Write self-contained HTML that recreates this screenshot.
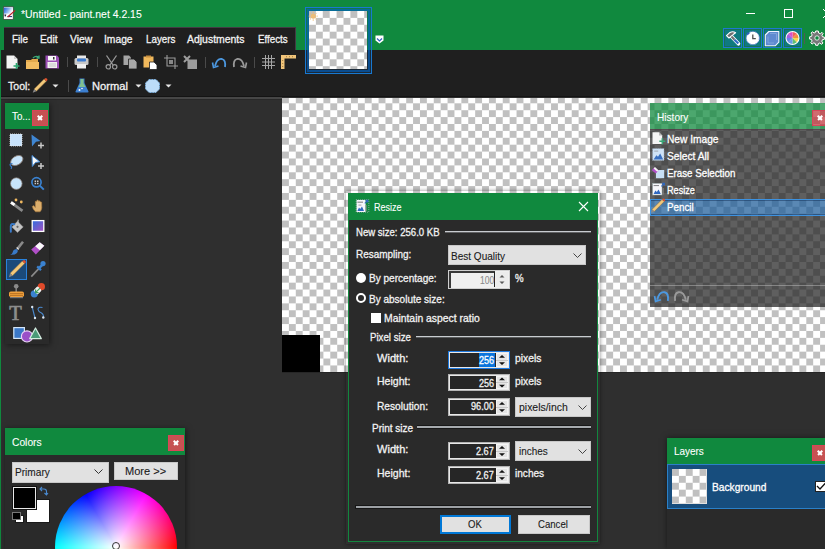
<!DOCTYPE html>
<html><head><meta charset="utf-8">
<style>
*{margin:0;padding:0;box-sizing:border-box}
html,body{width:825px;height:549px;overflow:hidden;background:#2f2f2f;font-family:"Liberation Sans",sans-serif;font-size:12px;letter-spacing:-0.6px;color:#f2f2f2}
.a{position:absolute}
.t{position:absolute;white-space:pre;line-height:12px;font-size:11px;letter-spacing:0;-webkit-text-stroke:0.3px;transform-origin:0 0}
svg{position:absolute;overflow:visible}
.chk{background:repeating-conic-gradient(#fff 0 25%,#c0c0c0 0 50%) 0 0/13.8px 13.8px}
.close{position:absolute;width:16px;height:16px;background:#c65252;box-shadow:inset 0 0 0 1px #dc4458}
.close:before,.close:after{content:"";position:absolute;left:5.2px;top:7.3px;width:6px;height:1.5px;background:#fff;transform:rotate(45deg)}
.close:after{transform:rotate(-45deg)}
.hdr{position:absolute;background:#10893e}
.btn{position:absolute;background:#e1e1e1;border:1px solid #c8c8c8}
.inp{position:absolute;background:#1c1c1c;border:2px solid #c9c9c9;width:62px;height:18px}
.spin{position:absolute;right:0;top:0;width:13px;height:100%;background:#ececec}
.dk{color:#1a1a1a}
.num{font-size:11px;letter-spacing:-0.8px}
</style></head><body>

<!-- ============ title bar ============ -->
<div class="a" style="left:0;top:0;width:825px;height:50px;background:#10893e"></div>
<svg style="left:0;top:0" width="20" height="24" viewBox="0 0 20 24">
 <defs><linearGradient id="ig" x1="0" y1="0" x2="1" y2=".4"><stop offset="0" stop-color="#1f5fd8"/><stop offset=".55" stop-color="#8ab4ee"/><stop offset="1" stop-color="#fff"/></linearGradient></defs>
 <rect x="3.4" y="6.8" width="9.8" height="12.6" fill="#fbfbfb" stroke="#3a3a3a" stroke-width=".7"/>
 <rect x="4" y="7.6" width="8.8" height="6" fill="url(#ig)"/>
 <path d="M4.3 14.6H6.3L5.6 16.4H4.8Z" fill="#10183a"/>
 <path d="M7.5 16.6H12" stroke="#1a2a70" stroke-width="1"/>
 <line x1="7.6" y1="17" x2="15.2" y2="10.4" stroke="#b8202c" stroke-width="1.2"/>
</svg>

<div class="a" style="left:746px;top:13px;width:9px;height:1px;background:#fff"></div>
<div class="a" style="left:784px;top:9px;width:9px;height:9px;border:1px solid #fff"></div>
<svg style="left:823px;top:9px" width="9" height="9"><path d="M0 0L9 9M9 0L0 9" stroke="#fff" stroke-width="1"/></svg>

<!-- right toggles -->
<div class="a" style="left:723px;top:28px;width:19px;height:20px;background:#0f7a7e;border:1px solid #1c78d0;box-shadow:inset 0 0 0 1px #16705a"></div>
<div class="a" style="left:743px;top:28px;width:19px;height:20px;background:#0f7a7e;border:1px solid #1c78d0;box-shadow:inset 0 0 0 1px #16705a"></div>
<div class="a" style="left:763px;top:28px;width:19px;height:20px;background:#0f7a7e;border:1px solid #1c78d0;box-shadow:inset 0 0 0 1px #16705a"></div>
<div class="a" style="left:783px;top:28px;width:19px;height:20px;background:#0f7a7e;border:1px solid #1c78d0;box-shadow:inset 0 0 0 1px #16705a"></div>
<svg style="left:723px;top:28px" width="19" height="20" viewBox="0 0 19 20">
 <path d="M8.5 8.5L15.5 15.8" stroke="#fff" stroke-width="3.6" stroke-linecap="round"/>
 <path d="M3.5 7.6L7 4.4Q10 3 12.6 4.8L10.5 6.3L6 10Z" fill="#6e6e6e" stroke="#fff" stroke-width="1.1" stroke-linejoin="round"/>
 <path d="M8.5 8.5L11.5 11.7" stroke="#707070" stroke-width="2"/>
 <path d="M11.5 11.7L15.3 15.6" stroke="#2f6cc8" stroke-width="2.2"/>
</svg>
<svg style="left:743px;top:28px" width="19" height="20" viewBox="0 0 19 20">
 <circle cx="9.8" cy="10" r="6.6" fill="#fff" stroke="#6a8ad8" stroke-width="1" stroke-dasharray="2 1"/>
 <path d="M9.8 6.4V10.6H12.8" stroke="#505050" stroke-width="1.3" fill="none"/>
 <path d="M3.5 4.5L7 5L4.5 7.5Z" fill="#2f5fc0"/>
</svg>
<svg style="left:763px;top:28px" width="19" height="20" viewBox="0 0 19 20">
 <path d="M5.8 3.5H15.8V14.2L12.2 17.8H2.3V7Z" fill="#5f8ad0" stroke="#f0f4ff" stroke-width="1.1" stroke-linejoin="round"/>
 <path d="M7 5.5H13.5V12M5 8.5V15H11" stroke="#8fb0e0" stroke-width=".7" fill="none"/>
</svg>
<svg style="left:783px;top:28px" width="19" height="20" viewBox="0 0 19 20">
 <circle cx="9.5" cy="10" r="7" fill="#fff"/>
 <g transform="translate(9.5 10)">
 <path d="M0 0V-6A6 6 0 0 1 4.24 -4.24Z" fill="#f06060"/>
 <path d="M0 0L4.24 -4.24A6 6 0 0 1 6 0Z" fill="#f09040"/>
 <path d="M0 0H6A6 6 0 0 1 4.24 4.24Z" fill="#f8d850"/>
 <path d="M0 0L4.24 4.24A6 6 0 0 1 0 6Z" fill="#60c070"/>
 <path d="M0 0V6A6 6 0 0 1 -4.24 4.24Z" fill="#6a9ae8"/>
 <path d="M0 0L-4.24 4.24A6 6 0 0 1 -6 0Z" fill="#6a80e8"/>
 <path d="M0 0H-6A6 6 0 0 1 -4.24 -4.24Z" fill="#a060e0"/>
 <path d="M0 0L-4.24 -4.24A6 6 0 0 1 0 -6Z" fill="#d850c8"/>
 </g>
</svg>
<div class="a" style="left:804px;top:33px;width:1px;height:11px;background:#505a55"></div>
<svg style="left:809px;top:30px" width="16" height="16" viewBox="0 0 16 16">
 <g transform="translate(8 8)">
 <path d="M-1.3 -7H1.3L1.6 -5L3.4 -4.3L5 -5.6L6.1 -4.4L4.9 -2.8L5.5 -1.2L7.4 -0.9V1.3L5.5 1.6L4.8 3.3L6 5L4.4 6.3L2.8 5L1.3 5.6L1 7.3H-1.3L-1.6 5.6L-3.3 4.9L-4.9 6.1L-6.2 4.7L-4.9 3.1L-5.6 1.4L-7.4 1.1V-1.2L-5.6 -1.5L-4.9 -3.2L-6 -4.9L-4.5 -6.2L-2.9 -5L-1.6 -5.5Z" fill="#777" stroke="#fff" stroke-width="1"/>
 <circle r="2.2" fill="#10893e" stroke="#fff" stroke-width=".8"/>
 </g>
</svg>

<!-- ============ menu ============ -->
<div class="a" style="left:4px;top:27px;width:292px;height:23px;background:#1f1f1f;border-top:1px solid #433c44;border-right:1px solid #433c44"></div>








<!-- ============ toolbar ============ -->
<div class="a" style="left:1px;top:50px;width:824px;height:46px;background:#1f1f1f"></div>
<div class="a" style="left:1px;top:96px;width:824px;height:1px;background:#141414"></div>
<div class="a" style="left:1px;top:97px;width:281px;height:2px;background:#464646"></div><div class="a" style="left:1px;top:99px;width:281px;height:1px;background:#282828"></div>

<!-- row 1 icons -->
<svg style="left:6px;top:55px" width="15" height="15" viewBox="0 0 15 15">
 <path d="M0.5 0.5H8L11.5 4V13.5H0.5Z" fill="#f4f4f4"/><path d="M8 0.5V4H11.5" fill="#ccc"/>
 <path d="M10.5 8V14M7.5 11H13.5" stroke="#2aa870" stroke-width="1.6"/>
</svg>
<svg style="left:26px;top:55px" width="15" height="15" viewBox="0 0 15 15">
 <path d="M0 5H5L6 4H12V14H0Z" fill="#e3a94c"/><path d="M0 7H13V14H0Z" fill="#f2bd62"/>
 <path d="M7 3Q10 0 13 2.5M13 0.5V3H10.5" stroke="#3aa878" stroke-width="1.3" fill="none"/>
</svg>
<svg style="left:45px;top:55px" width="15" height="14" viewBox="0 0 15 14">
 <path d="M0.5 0.5H12L14 2.5V13.5H0.5Z" fill="#9b4fb5"/>
 <rect x="3" y="1" width="8" height="4.5" fill="#fafafa"/><rect x="8" y="2" width="1.5" height="2.5" fill="#333"/>
 <rect x="2.5" y="7" width="9.5" height="6" fill="#f0f0f0"/><path d="M4 9H11M4 11H11" stroke="#bbb" stroke-width=".8"/>
</svg>
<div class="a" style="left:67px;top:57px;width:1px;height:10px;background:#4a4a4a"></div>
<svg style="left:74px;top:55px" width="15" height="14" viewBox="0 0 15 14">
 <rect x="3" y="0.5" width="9" height="3" fill="#e8e8e8"/>
 <rect x="0.5" y="3" width="14" height="7" rx="1.5" fill="#c8c8c8"/>
 <rect x="3" y="3.5" width="9" height="3" rx="1" fill="#3a7ad0"/>
 <rect x="3" y="9" width="9" height="4.5" fill="#eee"/>
</svg>
<div class="a" style="left:97px;top:57px;width:1px;height:10px;background:#4a4a4a"></div>
<svg style="left:105px;top:55px" width="13" height="15" viewBox="0 0 13 15">
 <path d="M1.5 0.5L8 10M11.5 0.5L5 10" stroke="#9a9a9a" stroke-width="1.3"/>
 <circle cx="3.3" cy="11.8" r="2.2" fill="none" stroke="#9a9a9a" stroke-width="1.2"/>
 <circle cx="9.7" cy="11.8" r="2.2" fill="none" stroke="#9a9a9a" stroke-width="1.2"/>
</svg>
<svg style="left:123px;top:55px" width="15" height="15" viewBox="0 0 15 15">
 <path d="M0.5 0.5H6L8 2.5V10H0.5Z" fill="#a5a5a5"/>
 <path d="M5.5 4H11L14 7V14H5.5Z" fill="#a8a8a8" stroke="#1f1f1f" stroke-width=".8"/>
</svg>
<svg style="left:143px;top:55px" width="15" height="15" viewBox="0 0 15 15">
 <rect x="0.5" y="1.5" width="10" height="11" fill="#f0b85c"/><rect x="3" y="0.5" width="5" height="2" fill="#c89040"/>
 <path d="M6.5 7H11L14 10V14.5H6.5Z" fill="#fff" stroke="#1f1f1f" stroke-width=".8"/>
</svg>
<svg style="left:164px;top:55px" width="14" height="14" viewBox="0 0 14 14">
 <path d="M3 0V11H14M0 3H11V14" stroke="#9a9a9a" stroke-width="1.1" fill="none"/>
 <rect x="5" y="5" width="4" height="4" fill="#888"/>
</svg>
<svg style="left:183px;top:55px" width="14" height="14" viewBox="0 0 14 14">
 <rect x="4.5" y="4.5" width="9.5" height="9.5" fill="#9d9d9d"/>
 <path d="M1 1L7 7M7 1L1 7" stroke="#9d9d9d" stroke-width="2"/>
</svg>
<div class="a" style="left:205px;top:57px;width:1px;height:11px;background:#4a4a4a"></div>
<svg style="left:212px;top:58px" width="15" height="10" viewBox="0 0 15 10">
 <path d="M3 8Q5 0 10 1Q14 2 13 9" stroke="#4c98e0" stroke-width="1.8" fill="none"/>
 <path d="M0.5 4.5L1.5 9.5L6.5 8" stroke="#4c98e0" stroke-width="1.6" fill="none"/>
</svg>
<svg style="left:232px;top:58px" width="15" height="10" viewBox="0 0 15 10">
 <path d="M12 8Q10 0 5 1Q1 2 2 9" stroke="#9a9a9a" stroke-width="1.8" fill="none"/>
 <path d="M14.5 4.5L13.5 9.5L8.5 8" stroke="#9a9a9a" stroke-width="1.6" fill="none"/>
</svg>
<div class="a" style="left:254px;top:57px;width:1px;height:11px;background:#4a4a4a"></div>
<svg style="left:262px;top:55px" width="13" height="14" viewBox="0 0 13 14">
 <path d="M3.5 0V14M6.5 0V14M9.5 0V14M0 3.5H13M0 7H13M0 10.5H13" stroke="#a5a5a5" stroke-width="1"/>
</svg>
<svg style="left:281px;top:55px" width="15" height="14" viewBox="0 0 15 14">
 <path d="M0 0H15V3.5H3.5V14H0Z" fill="#f0c47a"/>
 <path d="M5 1.7H6M8 1.7H9M11 1.7H12M1.7 5V6M1.7 8V9M1.7 11V12" stroke="#8a6a30" stroke-width=".8"/>
</svg>

<!-- row 2 -->

<svg style="left:32px;top:78px" width="16" height="16" viewBox="0 0 16 16">
 <path d="M4.3 13.3L2.1 11.1L12.1 1.1L14.3 3.3Z" fill="#f2c87a" stroke="#8a6a3a" stroke-width=".5"/>
 <path d="M12.1 1.1L14.3 3.3L15.5 2.1Q15.5 0.5 13.9 0.1Z" fill="#e2502e"/>
 <path d="M2.1 11.1L4.3 13.3L0.7 14.8Z" fill="#8a8a8a"/>
</svg>
<svg style="left:52px;top:84px" width="7" height="4"><path d="M0.5 0.5H6.5L3.5 3.5Z" fill="#e8e8e8"/></svg>
<div class="a" style="left:68px;top:80px;width:1px;height:12px;background:#4a4a4a"></div>
<svg style="left:75px;top:78px" width="14" height="15" viewBox="0 0 14 15">
 <path d="M4.5 0.5H9.5V5L13.5 13.5Q13.8 14.5 12.5 14.5H1.5Q0.2 14.5 0.5 13.5L4.5 5Z" fill="#3c7fd0"/>
 <path d="M5.5 1H8.5V5.5L10.5 9H3.5L5.5 5.5Z" fill="#80c090"/>
 <circle cx="4.5" cy="12" r="1" fill="#fff"/><circle cx="7" cy="10.5" r=".8" fill="#fff"/>
</svg>

<svg style="left:135px;top:84px" width="7" height="4"><path d="M0.5 0.5H6.5L3.5 3.5Z" fill="#e8e8e8"/></svg>
<svg style="left:145px;top:79px" width="15" height="14" viewBox="0 0 15 14">
 <path d="M4 0.5H11L14.5 4V10L11 13.5H4L0.5 10V4Z" fill="#bcdcf8" stroke="#7ab0e0" stroke-width="1" stroke-dasharray="1.5 1"/>
</svg>
<svg style="left:165px;top:84px" width="7" height="4"><path d="M0.5 0.5H6.5L3.5 3.5Z" fill="#e8e8e8"/></svg>

<!-- thumbnail -->
<div class="a" style="left:305px;top:7px;width:67px;height:67px;border:1px solid #1878d0;background:rgba(10,70,130,.25)"></div><div class="a" style="left:307px;top:9px;width:63px;height:63px;border:2px solid rgba(0,100,200,.6)"></div>
<div class="a chk" style="left:309px;top:11px;width:58px;height:58px;background-position:0 0;background-size:13.8px 13.8px"></div>
<svg style="left:308px;top:11px" width="10" height="10" viewBox="0 0 10 10">
 <g fill="#f0c078"><circle cx="5.2" cy="1.2" r=".7"/><circle cx="5.2" cy="9" r=".7"/><circle cx="1.3" cy="5.1" r=".7"/><circle cx="9.1" cy="5.1" r=".7"/><circle cx="2.4" cy="2.3" r=".6"/><circle cx="8" cy="2.3" r=".6"/><circle cx="2.4" cy="7.9" r=".6"/><circle cx="8" cy="7.9" r=".6"/></g>
 <circle cx="5.2" cy="5.1" r="2.7" fill="#ecbd78"/>
</svg>
<svg style="left:375px;top:35px" width="9" height="9" viewBox="0 0 9 9">
 <path d="M0.5 0.5H8.5V5.5L4.5 8.5L0.5 5.5Z" fill="#fff"/>
 <path d="M2 3.5L4.5 6L7 3.5" stroke="#2f5fc0" stroke-width="1.2" fill="none"/>
</svg>

<!-- ============ canvas ============ -->
<div class="a chk" style="left:282px;top:98px;width:543px;height:274px;background-position:0 -1.6px"></div>
<div class="a" style="left:282px;top:335px;width:38px;height:37px;background:#000"></div>
<div class="a" style="left:282px;top:372px;width:543px;height:1px;background:#262626"></div>

<!-- left green border -->
<div class="a" style="left:0;top:27px;width:4px;height:23px;background:#10893e"></div>
<div class="a" style="left:0;top:50px;width:1px;height:499px;background:#10893e"></div>

<!-- ============ tools panel ============ -->
<div class="a" style="left:5px;top:103px;width:44px;height:241px;background:#2a2a2a;box-shadow:1px 1px 6px rgba(0,0,0,.5)"></div>
<div class="hdr" style="left:5px;top:103px;width:44px;height:26px"></div>

<div class="close" style="left:32px;top:110px"></div>
<div class="a" style="left:6px;top:259px;width:21px;height:21px;background:#1b4a7a;border:1px solid #2a82dc"></div>
<svg style="left:0;top:0" width="60" height="350" viewBox="0 0 60 350">
 <!-- rect select -->
 <rect x="10" y="134" width="12" height="12" fill="#c8e2fa" stroke="#e8e8e8" stroke-width=".8" stroke-dasharray="1 1"/>
 <!-- move selected pixels -->
 <path d="M31.5 134.5L40.5 141L36 141.8L32 146.5Z" fill="#3f86d2"/>
 <path d="M41 142.5V148.5M38 145.5H44" stroke="#c8c8c8" stroke-width="1.5"/>
 <!-- lasso -->
 <ellipse cx="16.8" cy="160.5" rx="6.6" ry="4.4" transform="rotate(-30 16.8 160.5)" fill="#c8e4fa" stroke="#8c8078" stroke-width=".8"/>
 <path d="M12.5 163.5Q9 163.5 10.5 166Q12.5 166.5 11 168.8" stroke="#3a7ac8" stroke-width="1.2" fill="none"/>
 <!-- move selection -->
 <path d="M32 155.5L39.8 161.8L35.6 162.4L32.3 166.5Z" fill="#fafafa" stroke="#3f86d2" stroke-width="1"/>
 <path d="M41 163V169M38 166H44" stroke="#c8c8c8" stroke-width="1.5"/>
 <!-- ellipse select -->
 <circle cx="16.3" cy="183.6" r="5.8" fill="#c8e4fa" stroke="#8c8078" stroke-width=".7"/>
 <!-- zoom -->
 <circle cx="36.5" cy="182.3" r="4.6" fill="none" stroke="#3a82d0" stroke-width="1.7"/>
 <path d="M39.8 185.6L43.8 189.6" stroke="#3a82d0" stroke-width="2"/>
 <path d="M34.6 180.4h1.5v1.5h-1.5zM37 180.4h1.5v1.5h-1.5zM34.6 182.8h1.5v1.5h-1.5zM37 182.8h1.5v1.5h-1.5z" fill="#c8c8c8"/>
 <!-- magic wand -->
 <path d="M11 202.3L22.5 210.8" stroke="#8a8a8a" stroke-width="2.8"/>
 <path d="M11 202.3L14.5 204.9" stroke="#fff" stroke-width="2.8"/>
 <circle cx="16" cy="200" r="1.4" fill="#f0b860"/><circle cx="21.3" cy="202" r="1.4" fill="#f0b860"/>
 <!-- hand -->
 <path d="M35.5 211.8Q32.5 209 32.3 206.5L33.2 205.6Q34.5 206 35.3 207.5V201.5Q36 200.5 36.8 201.5V200.6Q37.6 199.6 38.4 200.6V201.2Q39.2 200.4 40 201.2V202Q40.8 201.4 41.6 202.2L41.8 208Q41.2 211.6 39.6 211.8Z" fill="#dcae6c" stroke="#a8783a" stroke-width=".6"/>
 <!-- paint bucket -->
 <path d="M17.5 221.2L23.2 226.9L17.5 232.6L11.8 226.9Z" fill="#c4c4c4" stroke="#999" stroke-width=".5"/>
 <path d="M18.2 219.8L17.6 226.5" stroke="#bdbdbd" stroke-width="1.1"/><circle cx="17.5" cy="226.8" r="1.1" fill="#666"/>
 <path d="M14.3 224.2Q11 223.2 10.8 226V231.8" stroke="#3a7ac8" stroke-width="2" fill="none" stroke-linecap="round"/>
 <!-- gradient -->
 <defs><linearGradient id="g1" x1="0" y1="0" x2="1" y2="1"><stop offset="0" stop-color="#2d6fe0"/><stop offset="1" stop-color="#a850c0"/></linearGradient></defs>
 <rect x="32.2" y="220.6" width="11.6" height="10.8" fill="url(#g1)" stroke="#fff" stroke-width="1.3"/>
 <!-- brush -->
 <path d="M23 241.8L17.8 248.4" stroke="#8a8a8a" stroke-width="2.6"/>
 <path d="M16.6 247.6L18.6 249.4" stroke="#e8e8e8" stroke-width="1.3"/>
 <path d="M16.4 249Q13 249.5 12.8 252Q12.4 254 10.2 254.8Q14.8 255.2 17 253Q18.2 251.5 17.6 250Z" fill="#3a7ac8"/>
 <!-- eraser -->
 <path d="M31.2 249.5L39.7 242.2L44.3 245.7L35.8 254.4Z" fill="#b050c8"/>
 <path d="M35.2 246.2L39.7 242.2L44.3 245.7L39.8 250.3Z" fill="#fafafa"/>
 <!-- pencil -->
 <path d="M12.5 275.7L10.1 273.3L22.3 261.1L24.7 263.5Z" fill="#f2c87a" stroke="#8a6a3a" stroke-width=".5"/>
 <path d="M22.3 261.1L24.7 263.5L25.9 262.3Q26 260.5 24.1 259.9Z" fill="#e2502e"/>
 <path d="M10.1 273.3L12.5 275.7L9 277.3Z" fill="#8a8a8a"/>
 <!-- color picker -->
 <path d="M31.3 276.6L38.8 268.6" stroke="#8a8a8a" stroke-width="1.7"/>
 <path d="M37.2 266.4L41 270.2" stroke="#3a82d0" stroke-width="2.2"/>
 <path d="M39 268.2L42.8 264.4" stroke="#3a82d0" stroke-width="2.6"/>
 <circle cx="43" cy="263.6" r="2.6" fill="#3a82d0"/>
 <!-- stamp -->
 <circle cx="16.2" cy="286.2" r="2.3" fill="#8a8a8a"/><path d="M16.2 287.5V292" stroke="#8a8a8a" stroke-width="1.4"/>
 <rect x="9" y="291.5" width="15" height="5.5" rx="1.8" fill="#f0a03c"/>
 <path d="M10 293.6H23M10 295.4H23" stroke="#a0601a" stroke-width=".7"/>
 <rect x="10" y="297" width="13" height="1.2" fill="#777"/>
 <!-- recolor -->
 <circle cx="34.3" cy="293.8" r="3.6" fill="#3a82d0"/><circle cx="41.4" cy="286.7" r="3.6" fill="#e04a2a"/>
 <rect x="34.6" y="287.4" width="6" height="6" rx="1.3" fill="#f0f0f0" transform="rotate(45 37.6 290.4)"/>
 <path d="M40 288.2L35.8 292.4M35.6 289.6V292.6H38.6" stroke="#40a060" stroke-width="1.2" fill="none"/>
 <!-- text T -->
 <text x="9.2" y="319.8" font-family="Liberation Serif" font-size="20.5" fill="#8c8c8c" stroke="#8c8c8c" stroke-width=".7">T</text>
 <!-- line/curve -->
 <path d="M32.2 307L35 318" stroke="#4a8ad0" stroke-width="1.1"/>
 <path d="M42.5 307.5Q38 306.5 38 309.5Q38.5 312 41.5 313Q44 314.5 43.3 317.5" stroke="#4a8ad0" stroke-width="1.1" fill="none"/>
 <circle cx="32.2" cy="307" r="1.2" fill="#d8e4f0"/><circle cx="35" cy="318" r="1.2" fill="#d8e4f0"/><circle cx="43.3" cy="317.5" r="1.2" fill="#d8e4f0"/>
 <!-- shapes -->
 <rect x="13.8" y="327.6" width="10.6" height="10.8" fill="#3a78c8" stroke="#d4e6f8" stroke-width="1.2"/>
 <circle cx="27" cy="336.4" r="5.6" fill="#9a50c8" stroke="#e8d4f4" stroke-width="1.2"/>
 <path d="M35.5 328L41.3 338.6H29.7Z" fill="#4a9a78" stroke="#d4ece0" stroke-width="1.2" stroke-linejoin="round"/>
</svg>

<!-- ============ colors panel ============ -->
<div class="a" style="left:5px;top:428px;width:180px;height:121px;background:#2a2a2a;box-shadow:1px 1px 6px rgba(0,0,0,.5)"></div>
<div class="hdr" style="left:5px;top:428px;width:180px;height:27px"></div>

<div class="close" style="left:168px;top:435px"></div>
<div class="btn" style="left:12px;top:462px;width:97px;height:21px"></div>

<svg style="left:94px;top:469px" width="9" height="6"><path d="M0.5 0.5L4.5 4.5L8.5 0.5" stroke="#333" fill="none"/></svg>
<div class="btn" style="left:114px;top:462px;width:64px;height:18px"></div>

<div class="a" style="left:26px;top:499px;width:24px;height:24px;background:#fff;border:1px solid #1a1a1a"></div>
<div class="a" style="left:13px;top:487px;width:23px;height:22px;background:#000;border:1px solid #e8e8e8;box-shadow:0 0 0 1px #111"></div>
<div class="a" style="left:15px;top:515px;width:9px;height:8px;background:#fff;border:1px solid #1a1a1a"></div>
<div class="a" style="left:12px;top:512px;width:9px;height:8px;background:#000;border:1px solid #777"></div>
<svg style="left:39px;top:487px" width="9" height="9" viewBox="0 0 9 9"><path d="M1 2H5Q7.5 2 7.5 4.5V8M5.5 6L7.5 8L9 6M3 0L1 2L3 4" stroke="#4a8ad0" stroke-width="1.1" fill="none"/></svg>
<div class="a" style="left:55px;top:486px;width:122px;height:122px;border-radius:50%;background:radial-gradient(circle closest-side,#fff 0%,rgba(255,255,255,0) 100%),conic-gradient(hsl(270,100%,50%),hsl(300,100%,50%) 30deg,hsl(330,100%,50%) 60deg,hsl(360,100%,50%) 90deg,hsl(30,100%,50%) 120deg,hsl(60,100%,50%) 150deg,hsl(90,100%,50%) 180deg,hsl(120,100%,50%) 210deg,hsl(150,100%,50%) 240deg,hsl(180,100%,50%) 270deg,hsl(210,100%,50%) 300deg,hsl(240,100%,50%) 330deg,hsl(270,100%,50%) 360deg)"></div>
<div class="a" style="left:112px;top:542px;width:8px;height:8px;border-radius:50%;border:1.5px solid #333"></div>

<!-- ============ history panel ============ -->
<div class="a" style="left:650px;top:129px;width:175px;height:70px;background:rgba(33,33,33,.72)"></div><div class="a" style="left:650px;top:216px;width:175px;height:91px;background:rgba(33,33,33,.72)"></div>
<div class="a" style="left:650px;top:103px;width:162px;height:26px;background:rgba(16,137,62,.75)"></div><div class="a" style="left:812px;top:103px;width:13px;height:7px;background:rgba(16,137,62,.75)"></div><div class="a" style="left:812px;top:126px;width:13px;height:3px;background:rgba(16,137,62,.75)"></div>
<div class="a" style="left:650px;top:129px;width:175px;height:1px;background:rgba(80,60,70,.6)"></div>

<div class="close" style="left:812px;top:110px;background:rgba(190,50,56,.72);box-shadow:inset 0 0 0 1px rgba(220,50,80,.6)"></div>
<svg style="left:640px;top:125px" width="30" height="95" viewBox="640 125 30 95">
 <path d="M652.5 132.3H659L662.2 135.5V144H652.5Z" fill="#f4f4f4"/>
 <path d="M659 132.3V135.5H662.2Z" fill="#b8b8b8"/>
 <path d="M662.3 138.2V144.2M659.3 141.2H665.3" stroke="#3aa878" stroke-width="1.5"/>
 <rect x="652.6" y="148.6" width="11.4" height="11.8" fill="#cfe3f6" stroke="#9aaabb" stroke-width=".7" stroke-dasharray="1 .8"/>
 <rect x="654.2" y="150.6" width="4" height="1" fill="#a0a8b0"/>
 <path d="M653.6 159.6L656.4 155.2L658 156.8L660.2 153.6L663.2 159.6Z" fill="#3a70c0"/>
 <rect x="656" y="170" width="8.2" height="8.2" fill="#c8e0f6"/>
 <path d="M651.8 170.2L654.6 167.2L658.6 170.4L655.8 173.6Z" fill="#b050c8"/>
 <path d="M653.6 168.4L655 167L658.6 170.4L657.2 171.8Z" fill="#f4f4f4"/>
 <rect x="652.6" y="183.4" width="9.4" height="11.6" fill="#f6f6fa" stroke="#9aa" stroke-width=".5"/>
 <rect x="653.6" y="185" width="5.4" height="1.1" fill="#8a8a90"/>
 <path d="M653.6 194L655.4 190.6L656.8 192L658.6 189.6L660.8 194Z" fill="#2f68c0"/>
 <rect x="662.6" y="188" width="1" height="6.6" fill="#8a8a8a"/>
 <path d="M661.4 186.4L664.2 183.6M662.2 183.4H664.4V185.6" stroke="#2f68c0" stroke-width="1.1" fill="none"/>
</svg>
<div class="a" style="left:650px;top:199px;width:175px;height:17px;background:rgba(26,90,151,.72);border-top:1px solid #3d92e0;border-bottom:1px solid #3d92e0;border-left:1px solid #3d92e0;box-shadow:inset 0 1px 0 rgba(20,50,90,.5),inset 0 -1px 0 rgba(20,50,90,.5)"></div>
<svg style="left:640px;top:195px" width="30" height="20" viewBox="640 195 30 20">
 <path d="M654.2 211.6L652 209.4L662 199.4L664.2 201.6Z" fill="#f2c87a" stroke="#8a6a3a" stroke-width=".5"/>
 <path d="M662 199.4L664.2 201.6L665.2 200.6Q665.2 199 663.6 198.4Z" fill="#e2502e"/>
 <path d="M652 209.4L654.2 211.6L651 212.8Z" fill="#8a8a8a"/>
</svg>





<div class="a" style="left:650px;top:285px;width:175px;height:1px;background:rgba(200,200,200,.45)"></div>
<svg style="left:654px;top:290px" width="16" height="13" viewBox="0 0 15 10"><path d="M3 8Q5 0 10 1Q14 2 13 9" stroke="#4c98e0" stroke-width="1.8" fill="none"/><path d="M0.5 4.5L1.5 9.5L6.5 8" stroke="#4c98e0" stroke-width="1.6" fill="none"/></svg>
<svg style="left:673px;top:290px" width="16" height="13" viewBox="0 0 15 10"><path d="M12 8Q10 0 5 1Q1 2 2 9" stroke="#9a9a9a" stroke-width="1.8" fill="none"/><path d="M14.5 4.5L13.5 9.5L8.5 8" stroke="#9a9a9a" stroke-width="1.6" fill="none"/></svg>

<!-- ============ layers panel ============ -->
<div class="a" style="left:667px;top:438px;width:158px;height:111px;background:#2a2a2a;box-shadow:0 0 6px rgba(0,0,0,.5)"></div>
<div class="hdr" style="left:667px;top:438px;width:158px;height:26px"></div>

<div class="close" style="left:812px;top:445px"></div>
<div class="a" style="left:667px;top:464px;width:158px;height:45px;background:#174d7d;border:1px solid #2a80c8;border-right:none"></div>
<div class="a chk" style="left:672px;top:469px;width:35px;height:35px"></div>

<div class="a" style="left:815px;top:481px;width:12px;height:11px;background:#fff;border:1px solid #222"></div>
<svg style="left:816px;top:482px" width="10" height="9"><path d="M1 4L4 7L10 0.5" stroke="#111" stroke-width="1.3" fill="none"/></svg>

<!-- ============ resize dialog ============ -->
<div class="a" style="left:346px;top:191px;width:254px;height:353px;box-shadow:0 0 4px rgba(0,0,0,.45)"></div>
<div class="a" style="left:348px;top:193px;width:250px;height:349px;background:#2a2a2a;border:1px solid #12873e"></div>
<div class="hdr" style="left:348px;top:193px;width:250px;height:27px"></div>
<svg style="left:352px;top:196px" width="20" height="20" viewBox="0 0 20 20">
 <rect x="4.2" y="3.6" width="12.6" height="12.6" fill="none" stroke="#c8b8d0" stroke-width=".6" stroke-dasharray="1 1"/>
 <rect x="4.6" y="4" width="9" height="12" fill="#f6f6fa"/>
 <rect x="5.4" y="5.6" width="5.6" height="1.2" fill="#8a8a90"/>
 <rect x="6.4" y="8.6" width="3" height="1" fill="#a0a0a8"/>
 <path d="M5.4 15L7 11.6L8.2 13L10 10.4L12 15Z" fill="#2f68c0"/>
 <rect x="13.6" y="9" width="1" height="6.4" fill="#8a8a8a"/>
 <path d="M12.8 7.4L15.6 4.6M13.6 4.4H15.8V6.6" stroke="#2f68c0" stroke-width="1.2" fill="none"/>
</svg>

<svg style="left:579px;top:202px" width="9" height="9"><path d="M0 0L9 9M9 0L0 9" stroke="#fff" stroke-width="1.1"/></svg>


<div class="a" style="left:445px;top:231px;width:146px;height:1px;background:#c8ccd0"></div><div class="a" style="left:445px;top:232px;width:146px;height:1px;background:rgba(200,204,208,.35)"></div>

<div class="btn" style="left:448px;top:245px;width:138px;height:20px"></div><svg style="left:573px;top:253px" width="9" height="6"><path d="M0.5 0.5L4.5 4.5L8.5 0.5" stroke="#444" fill="none"/></svg>
<div class="a" style="left:356px;top:273px;width:10px;height:10px;border-radius:50%;background:#fff"></div>

<div class="a" style="left:448px;top:270px;width:62px;height:19px;background:#f0f0f0;border:1px solid #d0d0d0"></div>
<div class="a" style="left:449px;top:271px;width:46px;height:17px;border-left:2px solid #3a3a3a;border-top:2px solid #3a3a3a"></div>

<div class="a" style="left:494px;top:272px;width:1px;height:15px;background:#222"></div>
<div class="a" style="left:496px;top:272px;width:12px;height:15px;background:#ececec"></div><svg style="left:496px;top:272px" width="12" height="15"><path d="M3.5 5.5H8.5L6 3Z M3.5 9.5H8.5L6 12Z" fill="#5a5a5a"/></svg>


<div class="a" style="left:356px;top:293px;width:10px;height:10px;border-radius:50%;border:2px solid #fff"></div>

<div class="a" style="left:371px;top:313px;width:10px;height:10px;background:#fff"></div>



<div class="a" style="left:416px;top:336px;width:175px;height:1px;background:#c8ccd0"></div><div class="a" style="left:416px;top:337px;width:175px;height:1px;background:rgba(200,204,208,.3)"></div>



<div class="a" style="left:448px;top:351px;width:62px;height:18px;background:#262626;border:1px solid #1e7ae0;box-shadow:inset 0 0 0 1px #e8e8e8"></div><div class="a" style="left:479px;top:353px;width:16px;height:14px;background:#0a74dc"></div><div class="a" style="left:496px;top:353px;width:12px;height:14px;background:#e4e4e4;border:1px solid #f4f4f4"></div><div class="a" style="left:496px;top:359.5px;width:12px;height:1px;background:#c8c8c8"></div><svg style="left:496px;top:353px" width="12" height="14"><path d="M3 4.7H9L6 2.0Z M3 9.3H9L6 12.0Z" fill="#111"/></svg><div class="a" style="left:448px;top:374px;width:62px;height:17px;background:#262626;border:1px solid #b4b4b4;box-shadow:inset 0 0 0 1px #e8e8e8"></div><div class="a" style="left:496px;top:376px;width:12px;height:13px;background:#e4e4e4;border:1px solid #f4f4f4"></div><div class="a" style="left:496px;top:382.0px;width:12px;height:1px;background:#c8c8c8"></div><svg style="left:496px;top:376px" width="12" height="13"><path d="M3 4.2H9L6 1.5Z M3 8.8H9L6 11.5Z" fill="#111"/></svg><div class="a" style="left:448px;top:398px;width:62px;height:18px;background:#262626;border:1px solid #b4b4b4;box-shadow:inset 0 0 0 1px #e8e8e8"></div><div class="a" style="left:496px;top:400px;width:12px;height:14px;background:#e4e4e4;border:1px solid #f4f4f4"></div><div class="a" style="left:496px;top:406.5px;width:12px;height:1px;background:#c8c8c8"></div><svg style="left:496px;top:400px" width="12" height="14"><path d="M3 4.7H9L6 2.0Z M3 9.3H9L6 12.0Z" fill="#111"/></svg>


<div class="btn" style="left:515px;top:397px;width:76px;height:20px"></div><svg style="left:578px;top:405px" width="9" height="6"><path d="M0.5 0.5L4.5 4.5L8.5 0.5" stroke="#444" fill="none"/></svg>

<div class="a" style="left:417px;top:425px;width:174px;height:4px;background:#181818;border-top:1px solid #181818"></div><div class="a" style="left:417px;top:426px;width:174px;height:2px;background:#a6aaae"></div>


<div class="a" style="left:448px;top:442px;width:62px;height:18px;background:#262626;border:1px solid #b4b4b4;box-shadow:inset 0 0 0 1px #e8e8e8"></div><div class="a" style="left:496px;top:444px;width:12px;height:14px;background:#e4e4e4;border:1px solid #f4f4f4"></div><div class="a" style="left:496px;top:450.5px;width:12px;height:1px;background:#c8c8c8"></div><svg style="left:496px;top:444px" width="12" height="14"><path d="M3 4.7H9L6 2.0Z M3 9.3H9L6 12.0Z" fill="#111"/></svg><div class="a" style="left:448px;top:466px;width:62px;height:18px;background:#262626;border:1px solid #b4b4b4;box-shadow:inset 0 0 0 1px #e8e8e8"></div><div class="a" style="left:496px;top:468px;width:12px;height:14px;background:#e4e4e4;border:1px solid #f4f4f4"></div><div class="a" style="left:496px;top:474.5px;width:12px;height:1px;background:#c8c8c8"></div><svg style="left:496px;top:468px" width="12" height="14"><path d="M3 4.7H9L6 2.0Z M3 9.3H9L6 12.0Z" fill="#111"/></svg><div class="btn" style="left:515px;top:441px;width:76px;height:20px"></div><svg style="left:578px;top:449px" width="9" height="6"><path d="M0.5 0.5L4.5 4.5L8.5 0.5" stroke="#444" fill="none"/></svg>


<div class="a" style="left:355px;top:505px;width:236px;height:4px;background:#161616"></div><div class="a" style="left:356px;top:506px;width:235px;height:2px;background:#9ca0a4"></div>
<div class="btn" style="left:440px;top:515px;width:71px;height:19px;border:2px solid #0078d7"></div>

<div class="btn" style="left:518px;top:515px;width:72px;height:19px"></div>


<!-- ============ texts ============ -->
<div class="t" style="left:21.1px;top:8px;color:#fff;-webkit-text-stroke-color:#fff;transform:scaleX(0.949);-webkit-text-stroke-width:0.1px">*Untitled - paint.net 4.2.15</div>
<div class="t" style="left:11.5px;top:33px;color:#f2f2f2;-webkit-text-stroke-color:#f2f2f2;transform:scaleX(0.901)">File</div>
<div class="t" style="left:39.7px;top:33px;color:#f2f2f2;-webkit-text-stroke-color:#f2f2f2;transform:scaleX(0.927)">Edit</div>
<div class="t" style="left:69.7px;top:33px;color:#f2f2f2;-webkit-text-stroke-color:#f2f2f2;transform:scaleX(0.940)">View</div>
<div class="t" style="left:104.2px;top:33px;color:#f2f2f2;-webkit-text-stroke-color:#f2f2f2;transform:scaleX(0.934)">Image</div>
<div class="t" style="left:145.5px;top:33px;color:#f2f2f2;-webkit-text-stroke-color:#f2f2f2;transform:scaleX(0.891)">Layers</div>
<div class="t" style="left:187.2px;top:33px;color:#f2f2f2;-webkit-text-stroke-color:#f2f2f2;transform:scaleX(0.950)">Adjustments</div>
<div class="t" style="left:258.0px;top:33px;color:#f2f2f2;-webkit-text-stroke-color:#f2f2f2;transform:scaleX(0.889)">Effects</div>
<div class="t" style="left:7.9px;top:80px;color:#f2f2f2;-webkit-text-stroke-color:#f2f2f2;transform:scaleX(0.959)">Tool:</div>
<div class="t" style="left:91.5px;top:80px;color:#f2f2f2;-webkit-text-stroke-color:#f2f2f2;transform:scaleX(1.012)">Normal</div>
<div class="t" style="left:11.7px;top:110px;color:#fff;-webkit-text-stroke-color:#fff;transform:scaleX(0.891);-webkit-text-stroke-width:0.1px">To...</div>
<div class="t" style="left:11.9px;top:436px;color:#fff;-webkit-text-stroke-color:#fff;transform:scaleX(0.933);-webkit-text-stroke-width:0.1px">Colors</div>
<div class="t" style="left:15.2px;top:466px;color:#1a1a1a;-webkit-text-stroke-color:#1a1a1a;transform:scaleX(0.919);-webkit-text-stroke-width:0.1px">Primary</div>
<div class="t" style="left:124.7px;top:465px;color:#1a1a1a;-webkit-text-stroke-color:#1a1a1a;transform:scaleX(1.005);-webkit-text-stroke-width:0.1px">More &gt;&gt;</div>
<div class="t" style="left:657.3px;top:111px;color:#fff;-webkit-text-stroke-color:#fff;transform:scaleX(0.918);-webkit-text-stroke-width:0.1px">History</div>
<div class="t" style="left:666.7px;top:133px;color:#fff;-webkit-text-stroke-color:#fff;transform:scaleX(0.926)">New Image</div>
<div class="t" style="left:666.7px;top:150px;color:#fff;-webkit-text-stroke-color:#fff;transform:scaleX(0.930)">Select All</div>
<div class="t" style="left:666.7px;top:167px;color:#fff;-webkit-text-stroke-color:#fff;transform:scaleX(0.887)">Erase Selection</div>
<div class="t" style="left:666.7px;top:184px;color:#fff;-webkit-text-stroke-color:#fff;transform:scaleX(0.828)">Resize</div>
<div class="t" style="left:666.7px;top:201px;color:#fff;-webkit-text-stroke-color:#fff;transform:scaleX(0.890)">Pencil</div>
<div class="t" style="left:673.7px;top:445px;color:#fff;-webkit-text-stroke-color:#fff;transform:scaleX(0.901);-webkit-text-stroke-width:0.1px">Layers</div>
<div class="t" style="left:712.1px;top:481px;color:#fff;-webkit-text-stroke-color:#fff;transform:scaleX(0.928)">Background</div>
<div class="t" style="left:373.8px;top:201px;color:#fff;-webkit-text-stroke-color:#fff;transform:scaleX(0.816);-webkit-text-stroke-width:0.1px">Resize</div>
<div class="t" style="left:356.1px;top:226px;color:#f2f2f2;-webkit-text-stroke-color:#f2f2f2;transform:scaleX(0.871)">New size: 256.0 KB</div>
<div class="t" style="left:355.9px;top:248px;color:#f2f2f2;-webkit-text-stroke-color:#f2f2f2;transform:scaleX(0.905)">Resampling:</div>
<div class="t" style="left:451.3px;top:250px;color:#1a1a1a;-webkit-text-stroke-color:#1a1a1a;transform:scaleX(0.912);-webkit-text-stroke-width:0.1px">Best Quality</div>
<div class="t" style="left:369.4px;top:272px;color:#f2f2f2;-webkit-text-stroke-color:#f2f2f2;transform:scaleX(0.914)">By percentage:</div>
<div class="t" style="left:515.0px;top:272px;color:#f2f2f2;-webkit-text-stroke-color:#f2f2f2;transform:scaleX(0.880)">%</div>
<div class="t" style="left:369.4px;top:293px;color:#f2f2f2;-webkit-text-stroke-color:#f2f2f2;transform:scaleX(0.910)">By absolute size:</div>
<div class="t" style="left:384.1px;top:312px;color:#f2f2f2;-webkit-text-stroke-color:#f2f2f2;transform:scaleX(0.943)">Maintain aspect ratio</div>
<div class="t" style="left:370.1px;top:331px;color:#f2f2f2;-webkit-text-stroke-color:#f2f2f2;transform:scaleX(0.879)">Pixel size</div>
<div class="t" style="left:377.1px;top:352px;color:#f2f2f2;-webkit-text-stroke-color:#f2f2f2;transform:scaleX(1.007)">Width:</div>
<div class="t" style="left:377.1px;top:375px;color:#f2f2f2;-webkit-text-stroke-color:#f2f2f2;transform:scaleX(0.956)">Height:</div>
<div class="t" style="left:377.1px;top:400px;color:#f2f2f2;-webkit-text-stroke-color:#f2f2f2;transform:scaleX(0.926)">Resolution:</div>
<div class="t" style="left:514.8px;top:352px;color:#f2f2f2;-webkit-text-stroke-color:#f2f2f2;transform:scaleX(0.938)">pixels</div>
<div class="t" style="left:514.8px;top:375px;color:#f2f2f2;-webkit-text-stroke-color:#f2f2f2;transform:scaleX(0.938)">pixels</div>
<div class="t" style="left:518.6px;top:401px;color:#1a1a1a;-webkit-text-stroke-color:#1a1a1a;transform:scaleX(0.950);-webkit-text-stroke-width:0.1px">pixels/inch</div>
<div class="t" style="left:372.3px;top:422px;color:#f2f2f2;-webkit-text-stroke-color:#f2f2f2;transform:scaleX(0.910)">Print size</div>
<div class="t" style="left:377.1px;top:443px;color:#f2f2f2;-webkit-text-stroke-color:#f2f2f2;transform:scaleX(1.007)">Width:</div>
<div class="t" style="left:377.1px;top:467px;color:#f2f2f2;-webkit-text-stroke-color:#f2f2f2;transform:scaleX(0.956)">Height:</div>
<div class="t" style="left:518.6px;top:445px;color:#1a1a1a;-webkit-text-stroke-color:#1a1a1a;transform:scaleX(0.901);-webkit-text-stroke-width:0.1px">inches</div>
<div class="t" style="left:514.8px;top:467px;color:#f2f2f2;-webkit-text-stroke-color:#f2f2f2;transform:scaleX(0.917)">inches</div>
<div class="t" style="left:468.4px;top:518px;color:#1a1a1a;-webkit-text-stroke-color:#1a1a1a;transform:scaleX(0.868);-webkit-text-stroke-width:0.1px">OK</div>
<div class="t" style="left:538.3px;top:518px;color:#1a1a1a;-webkit-text-stroke-color:#1a1a1a;transform:scaleX(0.873);-webkit-text-stroke-width:0.1px">Cancel</div>
<div class="t" style="left:479.5px;top:274px;color:#8a8a8a;-webkit-text-stroke-color:#8a8a8a;transform:scaleX(0.775);-webkit-text-stroke-width:0.1px">100</div>
<div class="t" style="left:478.7px;top:354px;color:#fff;-webkit-text-stroke-color:#fff;transform:scaleX(0.824)">256</div>
<div class="t" style="left:478.7px;top:377px;color:#f2f2f2;-webkit-text-stroke-color:#f2f2f2;transform:scaleX(0.824)">256</div>
<div class="t" style="left:471.0px;top:400px;color:#f2f2f2;-webkit-text-stroke-color:#f2f2f2;transform:scaleX(0.835)">96.00</div>
<div class="t" style="left:476.1px;top:445px;color:#f2f2f2;-webkit-text-stroke-color:#f2f2f2;transform:scaleX(0.830)">2.67</div>
<div class="t" style="left:476.1px;top:469px;color:#f2f2f2;-webkit-text-stroke-color:#f2f2f2;transform:scaleX(0.830)">2.67</div>
</body></html>
